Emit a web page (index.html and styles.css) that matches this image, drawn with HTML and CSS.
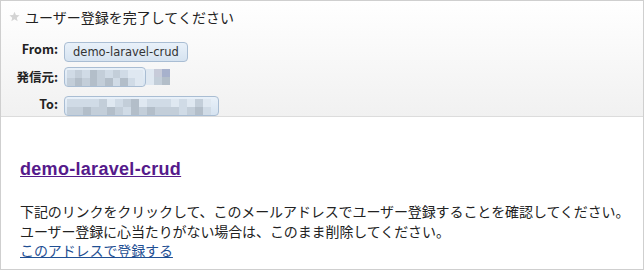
FILE: index.html
```html
<!DOCTYPE html>
<html lang="ja">
<head>
    <meta charset="UTF-8">
    <title>ユーザー登録を完了してください</title>
    <link rel="stylesheet" href="styles.css">
</head>
<body>
    <div class="mail">
        <div class="header">
            <div class="subject">
                <svg class="star" width="11" height="11" viewBox="0 0 24 24"><path d="M12 1.5l3.1 7.3 7.9.6-6 5.2 1.9 7.7L12 18.2 5.1 22.3 7 14.6 1 9.4l7.9-.6z" fill="#d4d4d4"/></svg>
                <span>ユーザー登録を完了してください</span>
            </div>
            <div class="fields">
                <div class="label">From:</div>
                <div><span class="pill">demo-laravel-crud</span></div>

                <div class="label">発信元:</div>
                <div class="sender">
                    <div class="pill blur">
                        <div class="row">
                            <i class="k1"></i><i class="k2"></i><i class="k1"></i><i class="k3"></i><i class="k2"></i><i class="k1"></i><i class="k2"></i><i class="k1"></i><i class="k0"></i><i class="k0"></i>
                        </div>
                        <div class="row">
                            <i class="k2"></i><i class="k3"></i><i class="k2"></i><i class="k3"></i><i class="k2"></i><i class="k3"></i><i class="k1"></i><i class="k3"></i><i class="k1"></i><i class="k0"></i>
                        </div>
                    </div>
                    <div class="tail">
                        <div class="row"><i class="k0"></i><i class="kb"></i><i class="kc"></i></div>
                        <div class="row"><i class="k0"></i><i class="k2"></i><i class="k3"></i></div>
                    </div>
                </div>

                <div class="label">To:</div>
                <div>
                    <div class="pill blur wide">
                        <div class="row">
                            <i class="k1"></i><i class="k1"></i><i class="k1"></i><i class="k1"></i><i class="k2"></i><i class="k0"></i><i class="k1"></i><i class="k2"></i><i class="k3"></i><i class="k0"></i><i class="k1"></i><i class="k1"></i><i class="k1"></i><i class="k0"></i><i class="k1"></i><i class="k0"></i><i class="k2"></i><i class="k0"></i>
                        </div>
                        <div class="row">
                            <i class="k2"></i><i class="k2"></i><i class="k3"></i><i class="k2"></i><i class="k2"></i><i class="k3"></i><i class="k2"></i><i class="k1"></i><i class="k3"></i><i class="k2"></i><i class="k3"></i><i class="k2"></i><i class="k2"></i><i class="k2"></i><i class="k1"></i><i class="k2"></i><i class="k3"></i><i class="k1"></i>
                        </div>
                    </div>
                </div>
            </div>
        </div>
        <div class="content">
            <h1><a href="#" class="app-link">demo-laravel-crud</a></h1>
            <p>
                下記のリンクをクリックして、このメールアドレスでユーザー登録することを確認してください。<br>
                ユーザー登録に心当たりがない場合は、このまま削除してください。<br>
                <a href="#" class="confirm-link">このアドレスで登録する</a>
            </p>
        </div>
    </div>
</body>
</html>
```

FILE: styles.css
```css
html, body {
    margin: 0;
    background: #fff;
}

body {
    font-family: "Noto Sans CJK JP", "DejaVu Sans", sans-serif;
    color: #222;
}

.mail {
    width: 644px;
    height: 270px;
    box-sizing: border-box;
    border: 1px solid #cfcfcf;
    overflow: hidden;
}

.header {
    height: 115px;
    background: linear-gradient(#ffffff, #f1f1f1);
    border-bottom: 1px solid #dcdcdc;
}

.subject {
    display: flex;
    align-items: center;
    gap: 5px;
    padding: 6px 8px 0;
    font-size: 14px;
    line-height: 20px;
    color: #222;
}

.star {
    margin-top: -1px;
}

.fields {
    display: grid;
    grid-template-columns: 49px auto;
    column-gap: 6px;
    row-gap: 5px;
    margin-top: 10px;
    padding-left: 8px;
    align-items: center;
}

.label {
    text-align: right;
    font-size: 12.5px;
    font-weight: bold;
    color: #222;
    line-height: 20px;
    white-space: nowrap;
}

.pill {
    display: inline-block;
    box-sizing: border-box;
    height: 20px;
    padding: 0 8px;
    border: 1px solid #a9bdd3;
    border-radius: 4px;
    background: linear-gradient(#e9f1f9, #d6e3f0);
    font-family: "DejaVu Sans", sans-serif;
    font-size: 11.5px;
    line-height: 18px;
    color: #333;
    vertical-align: middle;
}

/* pixelated (hidden) addresses */
.sender {
    display: flex;
    align-items: flex-start;
}

.blur {
    padding: 2px 2px 0;
    width: 82px;
}

.blur.wide {
    width: 155px;
}

.row {
    display: flex;
}

.row i {
    display: block;
    width: 8px;
    height: 8px;
}

.tail {
    padding-top: 2px;
}

.k0 { background: #dfe8f1; }
.k1 { background: #d0dbe6; }
.k2 { background: #c3ced9; }
.k3 { background: #b3bec9; }
.kb { background: #c7cbd9; }
.kc { background: #a7b1cc; }

.content {
    padding: 41px 4px 0 19px;
}

h1 {
    margin: 0;
    font-family: "Liberation Sans", Arial, sans-serif;
    font-size: 18px;
    letter-spacing: 0.3px;
    line-height: 22px;
    font-weight: bold;
}

.app-link {
    color: #551a8b;
}

p {
    margin: 22px 0 0;
    font-size: 14px;
    letter-spacing: -0.1px;
    line-height: 19.5px;
    color: #222;
    white-space: nowrap;
}

.confirm-link {
    color: #1f4f93;
}
```
